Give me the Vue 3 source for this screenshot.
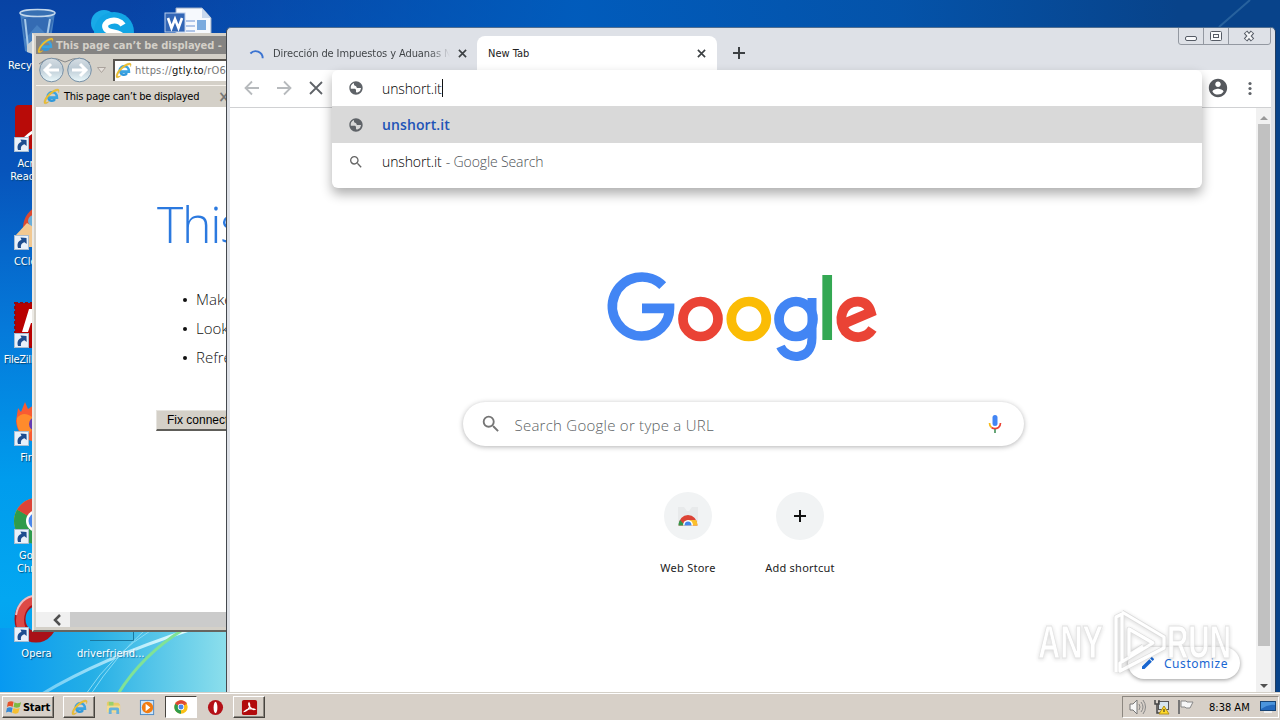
<template>
  <div class="desktop">
    <svg class="symbols" width="0" height="0">
      <symbol id="ie" viewBox="0 0 16 16">
        <path d="M13.2 9.2H5.2c.1 3.3 4.7 3.7 6 1.2" fill="none" stroke="#3198da" stroke-width="2.4" />
        <path d="M4.3 8.2c.2-5.6 8.9-5.7 8.9.9H5" fill="none" stroke="#3aa4e2" stroke-width="2.3" />
        <path d="M1.2 14.6C-.8 10.6 8.3 1.2 13.4 1c2.300 0 2 2 1.200 3.500.2-2-.8-2.300-3-1.300C7.500 5 3 10 2.400 13.200c1 .6 2 .2 3.200-.5-1.300 1.600-3.600 2.800-4.400 1.900z" fill="#f0c22c" stroke="#c9a338" stroke-width=".3" />
      </symbol>
      <symbol id="globe" viewBox="0 0 24 24">
        <path fill="#5f6368" d="M12 2C6.480 2 2 6.480 2 12s4.480 10 10 10 10-4.480 10-10S17.520 2 12 2zm3 16.500c-1.500.8-3 .5-3-1.200v-1.800c0-1.400-1-2.200-2.400-2.200H4.200A8 8 0 0 1 9 4.600c.2 1.600-.4 2.600.8 3.600 1.100.9 2.500.4 2.700 1.900.2 1.300 1 2 2.300 2h4.900a8 8 0 0 1-4.700 6.400z" />
      </symbol>
      <symbol id="lens" viewBox="0 0 24 24">
        <path fill="currentColor" d="M15.500 14h-.79l-.28-.27A6.470 6.470 0 0 0 16 9.500 6.500 6.500 0 1 0 9.500 16c1.610 0 3.090-.59 4.230-1.570l.27.28v.79l5 4.990L20.490 19l-4.990-5zm-6 0C7.010 14 5 11.990 5 9.500S7.010 5 9.500 5 14 7.010 14 9.500 11.990 14 9.500 14z" />
      </symbol>
      <symbol id="chrome" viewBox="0 0 48 48">
        <circle cx="24" cy="24" r="23" fill="#fbc116" />
        <path d="M24 24 4.100 12.500A23 23 0 0 1 43.900 12.500z" fill="#dc4437" />
        <path d="M24 24 4.100 12.500A23 23 0 0 0 24 47z" fill="#2f9b4c" />
        <path d="M24 13h20.200L34 30z" fill="#fbc116" />
        <path d="M4.100 12.500h40L24 24z" fill="#dc4437" />
        <circle cx="24" cy="24" r="11" fill="#fff" />
        <circle cx="24" cy="24" r="8.500" fill="#4a87ea" />
      </symbol>
      <symbol id="shortcut" viewBox="0 0 15 15">
        <rect x=".5" y=".5" width="14" height="14" fill="#e9f1fa" stroke="#a9bdd1" />
        <path d="M4 13C2.500 8 5 5.500 7.500 5L6.500 2.500 12.500 3l.2 6-2.200-1.700C8 8 6.500 9.500 7 13z" fill="#1d4d8f" />
      </symbol>
    </svg>

    <svg class="wallpaper" viewBox="0 0 1280 720">
      <defs>
        <linearGradient id="glow" x1="0" x2="1">
          <stop offset="0" stop-color="#0799f1" />
          <stop offset=".4" stop-color="#25afe6" />
          <stop offset="1" stop-color="#8fe0ec" />
        </linearGradient>
        <linearGradient id="ray" x1="0" x2="1">
          <stop offset="0" stop-color="#70cdf5" />
          <stop offset="1" stop-color="#e6ffff" />
        </linearGradient>
      </defs>
      <rect y="628" width="230" height="70" fill="url(#glow)" />
      <path d="M42 694Q100 659 192 629" fill="none" stroke="url(#ray)" stroke-width="3" />
      <path d="M86 694Q112 654 153 629M91 694Q115 657 146 629" fill="none" stroke="#8bdcf5" />
      <path d="M118 694Q142 655 184 629" fill="none" stroke="#80e296" stroke-width="3" />
      <path d="M1219 27 1250 0" stroke="#3c76ab" stroke-width="2" opacity=".6" />
      <path d="M90 640.500H133.500V630" fill="none" stroke="#1a789f" />
    </svg>

    <div v-for="item in shortcuts" :key="item.name" class="shortcut" :style="{ left: `${item.x}px`, top: `${item.y}px` }">
      <svg class="shortcut-icon" viewBox="0 0 48 48">
        <g v-if="item.icon === 'bin'">
          <path d="M7 6 12 44Q24 51 36 44L42 6z" fill="#4f87c5" opacity=".9" />
          <path d="M9 12 25 7 40 13 36 30 24 18 12 32z" fill="#2c63ad" opacity=".7" />
          <path d="M12 12 15 40M37 12 33 36" stroke="#a5c9ea" stroke-width="2" fill="none" />
          <path d="M14 38l7-6 11 3 3 9-12 4-9-3z" fill="#c2ccd3" />
          <ellipse cx="24.500" cy="6" rx="17.500" ry="3.500" fill="#3870b3" stroke="#c4d8ec" stroke-width="1.500" />
        </g>
        <g v-else-if="item.icon === 'skype'">
          <circle cx="16" cy="16" r="13" fill="#19aae8" /><circle cx="26" cy="25" r="20" fill="#12a5e5" />
          <path d="M35 18c-5-8-22-4-17 4 3 5 16 2 17 10 1 8-18 9-20 0" fill="none" stroke="#fff" stroke-width="6" />
        </g>
        <g v-else-if="item.icon === 'word'">
          <path d="M12 1H38L47 11V48H12z" fill="#f6f9fd" stroke="#9aabc4" />
          <path d="M38 1V11H47z" fill="#c8d8ed" /><path d="M22 14h9M22 19h9M22 24h9" stroke="#6991d3" />
          <rect x="33" y="13" width="9" height="10" fill="#7aaade" />
          <rect x="1" y="6" width="20" height="19" fill="#3266b6" stroke="#b8cce9" />
          <path d="M4 11 7.500 21 11 12 14.500 21 18 11" fill="none" stroke="#fff" stroke-width="2.600" />
        </g>
        <g v-else-if="item.icon === 'acrobat'">
          <rect x="2" y="0" width="44" height="44" rx="4" fill="#b80b08" />
          <path d="M12 33C15 30 18 27 24 25" fill="none" stroke="#fff" stroke-width="2.500" />
        </g>
        <g v-else-if="item.icon === 'ccleaner'">
          <path d="M10 24Q11 9 26 2L34 15 25 32z" fill="#dc4930" />
          <circle cx="21" cy="18" r="6" fill="#6aaed9" />
          <path d="M2 33 14 20 31 31 30 44H7z" fill="#f2c890" />
        </g>
        <g v-else-if="item.icon === 'filezilla'">
          <rect x="2" y="2" width="44" height="44" fill="#b80000" stroke="#8e0b12" stroke-width="2" stroke-dasharray="3 2" />
          <path d="M9 31 16 8H35L33 13H21L20 17H32L30 22H18L15 31z" fill="#fff" />
        </g>
        <g v-else-if="item.icon === 'firefox'">
          <path d="M3 22 5 9 8 13 12 3 15 10 21 6 25 12C42 7 48 23 42 34 33 48 5 46 3 22z" fill="#f85b32" />
          <path d="M4 19C10 11 20 16 23 24L14 38C8 36 3 29 4 19z" fill="#ff8b2c" /><circle cx="23" cy="25" r="7" fill="#653bb3" />
        </g>
        <use v-else-if="item.icon === 'chrome'" href="#chrome" />
        <g v-else-if="item.icon === 'opera'">
          <ellipse cx="23" cy="24" rx="16" ry="18" fill="none" stroke="#a91118" stroke-width="11" />
          <path d="M9 35C4 23 9 6 23 5" fill="none" stroke="#dd4a46" stroke-width="8" />
          <path d="M3 20C5 8 13 1 22 1" fill="none" stroke="#f0bcc0" stroke-width="2" />
        </g>
      </svg>
      <svg v-if="item.link" class="shortcut-arrow"><use href="#shortcut" /></svg>
      <span class="shortcut-name" :class="{ long: item.long }">{{ item.name }}</span>
    </div>
    <span class="file-name">driverfriend...</span>

    <section class="ie">
      <div class="ie-title"><svg><use href="#ie" /></svg><b>This page can’t be displayed -</b></div>
      <div class="ie-bar">
        <svg class="ie-nav" viewBox="0 0 64 28">
          <defs>
            <linearGradient id="orb" x1="0" y1="0" x2="0" y2="1">
              <stop offset="0" stop-color="#d6dee4" /><stop offset=".45" stop-color="#bccad4" /><stop offset="1" stop-color="#eaf8fb" />
            </linearGradient>
          </defs>
          <path d="M3 8Q14-2 29 6Q45-2 54 7" fill="none" stroke="#858789" />
          <circle cx="15.500" cy="14" r="11.800" fill="url(#orb)" stroke="#7790a6" /><circle cx="43.500" cy="14" r="11.800" fill="url(#orb)" stroke="#7790a6" />
          <path d="M23 14H9M15 8 9 14l6 6M36 14h14M44 8l6 6-6 6" fill="none" stroke="#fff" stroke-width="3" />
        </svg>
        <svg class="ie-drop" viewBox="0 0 9 6"><path d="M.5.500h8l-4 5z" fill="#e4dfda" stroke="#aaa29c" /></svg>
        <div class="ie-address"><svg><use href="#ie" /></svg><span>https://<i>gtly.to</i>/rO6</span></div>
      </div>
      <div class="ie-tab"><svg><use href="#ie" /></svg><span>This page can’t be displayed</span><b>×</b></div>
      <div class="ie-page">
        <h1>This page</h1>
        <ul><li>Make sure</li><li>Look for</li><li>Refresh</li></ul>
        <button>Fix connection</button>
      </div>
      <div class="ie-scroll"><svg viewBox="0 0 10 12"><path d="M8 1 3 6l5 5" fill="none" stroke="#505050" stroke-width="2.500" /></svg></div>
    </section>

    <section class="browser">
      <div class="tabs">
        <div class="tab">
          <svg class="spinner" viewBox="0 0 18 18"><path d="M1.500 9A7.500 7.500 0 0 1 14.500 14" fill="none" stroke="#3b73d1" stroke-width="2" /></svg>
          <span class="tab-title fade">Dirección de Impuestos y Aduanas N</span>
          <svg class="cross" viewBox="0 0 10 10"><path d="m1 1 8 8m0-8L1 9" /></svg>
        </div>
        <div class="tab active">
          <span class="tab-title">New Tab</span>
          <svg class="cross" viewBox="0 0 10 10"><path d="m1 1 8 8m0-8L1 9" /></svg>
        </div>
        <svg class="plus" viewBox="0 0 12 12"><path d="M6 0v12M0 6h12" stroke="#3c4043" stroke-width="2" /></svg>
        <svg class="controls" viewBox="0 0 93 17">
          <path d="M.5 0v14q0 2.500 2.500 2.500h87q2.500 0 2.500-2.500V0M25.500 0v16M50.500 0v16" fill="none" stroke="#9398a1" />
          <g fill="#f8f9fb" stroke="#555b65"><rect x="7.500" y="8.500" width="11" height="4" rx="1.500" /><rect x="32.500" y="3.500" width="11" height="9" rx="1" /><rect x="35.500" y="6.500" width="5" height="3" /></g>
          <path d="m67.500 4 7 8m0-8-7 8" stroke="#555b65" stroke-width="4.500" /><path d="m68 4.500 6 7m0-7-6 7" stroke="#f4f5f7" stroke-width="2.500" />
        </svg>
      </div>

      <div class="toolbar">
        <svg class="nav" viewBox="0 0 80 16">
          <path d="M15 8H2M8 1.500 1.500 8 8 14.500M33 8h13M40 1.500 46.500 8 40 14.500" fill="none" stroke="#b7babd" stroke-width="1.800" />
          <path d="m66 2 12 12M78 2 66 14" stroke="#5f6368" stroke-width="1.800" />
        </svg>
        <svg class="user" viewBox="0 0 24 24"><path fill="#55585d" d="M12 2C6.480 2 2 6.480 2 12s4.480 10 10 10 10-4.480 10-10S17.520 2 12 2zm0 3c1.660 0 3 1.340 3 3s-1.340 3-3 3-3-1.340-3-3 1.340-3 3-3zm0 14.200a7.200 7.200 0 0 1-6-3.220c.03-1.990 4-3.080 6-3.080 1.990 0 5.970 1.090 6 3.080a7.200 7.200 0 0 1-6 3.220z" /></svg>
        <svg class="dots" viewBox="0 0 4 16"><g fill="#5f6368"><circle cx="2" cy="3.500" r="1.600" /><circle cx="2" cy="8.500" r="1.600" /><circle cx="2" cy="13.500" r="1.600" /></g></svg>
      </div>

      <div class="viewport">
        <main class="newtab">
          <svg class="logo" viewBox="606 270 275 94" fill="none" stroke-width="9.700">
            <path d="M662.700 285.600A29.500 29.500 0 1 0 641.800 336A27.800 27.600 0 0 0 669.500 308.400H642" stroke="#4285f4" />
            <circle cx="700.500" cy="319" r="17.500" stroke="#ea4335" />
            <circle cx="748.800" cy="319" r="17.500" stroke="#fbbc05" />
            <ellipse cx="796" cy="319" rx="17" ry="17.500" stroke="#4285f4" />
            <path d="M812 298V338C812 361 787 361 780.500 346.500" stroke="#4285f4" stroke-width="9" />
            <path d="M827.200 275V340" stroke="#34a853" />
            <path d="M872.500 329C866 339 853 339.500 845.500 331.500 837 321 841.500 302 857.500 301.700 865 301.500 869 306 870.800 312.300L842 324.500" stroke="#ea4335" />
          </svg>
          <div class="search">
            <svg class="search-lens"><use href="#lens" /></svg>
            <span>Search Google or type a URL</span>
            <svg class="mic" viewBox="0 0 14 20">
              <rect x="4.500" y="1" width="5" height="11" rx="2.500" fill="#4285f4" />
              <path d="M1.500 9q0 3 2 4.500" fill="none" stroke="#f9bb17" stroke-width="1.700" />
              <path d="M3.500 13.500q3.500 2.200 7 0 2-1.500 2-4.500" fill="none" stroke="#ea4335" stroke-width="1.700" />
              <path d="M7 15v4" stroke="#4d9660" stroke-width="1.700" />
            </svg>
          </div>
          <div class="tiles">
            <div class="tile">
              <div class="disc"><svg viewBox="0 0 24 24">
                <path d="M2 3h6l3 4h2l3-4h6v15H2z" fill="#e8eaeb" />
                <path d="M2.500 21.500a9.500 10.500 0 0 1 19 0z" fill="#dc4335" />
                <path d="M2.500 21.500a9.500 10 0 0 1 1.500-5.500l5 5.500z" fill="#32984c" />
                <path d="M12 16h8.100q1.400 2 1.400 5.500H12z" fill="#fbc02b" />
                <path d="M7 21.500a5 5.500 0 0 1 10 0z" fill="#fff" /><path d="M8.500 21.500a3.500 4 0 0 1 7 0z" fill="#4387ec" />
              </svg></div>
              <span>Web Store</span>
            </div>
            <div class="tile">
              <div class="disc"><svg class="add" viewBox="0 0 12 12"><path d="M6 0v12M0 6h12" stroke="#111" stroke-width="2" /></svg></div>
              <span>Add shortcut</span>
            </div>
          </div>
        </main>
        <div class="scrollbar">
          <svg viewBox="0 0 8 5"><path d="m0 5 4-4 4 4z" fill="#999" /></svg>
          <div class="thumb"></div>
          <svg viewBox="0 0 8 5"><path d="m0 0 4 4 4-4z" fill="#505050" /></svg>
        </div>
        <div class="customize"><svg viewBox="0 0 24 24"><path fill="#1967d2" d="M3 17.250V21h3.750L17.810 9.940l-3.750-3.750zM20.710 7.040a1 1 0 0 0 0-1.410l-2.340-2.340a1 1 0 0 0-1.410 0l-1.830 1.830 3.750 3.750z" /></svg><span>Customize</span></div>
      </div>

      <div class="omnibox">
        <div class="omni-row typed"><svg><use href="#globe" /></svg><span>unshort.it</span><i class="caret"></i></div>
        <div class="omni-row selected"><svg><use href="#globe" /></svg><span>unshort.it</span></div>
        <div class="omni-row"><svg><use href="#lens" /></svg><span>unshort.it</span><em>- Google Search</em></div>
      </div>
    </section>

    <svg class="watermark" viewBox="0 0 210 72">
      <text x="8" y="50" textLength="65" lengthAdjust="spacingAndGlyphs">ANY</text>
      <g fill="none" stroke-linejoin="round">
        <path d="M86 64V9L92 6V55M92 4 134 29V40L90 63V55L123 35 99 21V47L113 38" stroke="#d4d4d4" stroke-width="4.500" />
        <path d="M86 64V9L92 6V55M92 4 134 29V40L90 63V55L123 35 99 21V47L113 38" stroke="#fff" stroke-width="3.200" />
      </g>
      <text x="137" y="50" textLength="64" lengthAdjust="spacingAndGlyphs">RUN</text>
    </svg>

    <footer class="taskbar">
      <div class="start raised"><svg viewBox="0 0 18 16"><path d="M2 3q3-2 6-.5L7 8Q4 6 1 8z" fill="#e5532b" /><path d="M9 3q3 2 7 0l-1.500 5q-3 1.500-6.500 0z" fill="#7dba42" /><path d="M1 9q3-1.500 6-.2L6 14q-3-2-6-.2z" fill="#3689d5" /><path d="M8 9q3 1.500 6.500 0L13 14q-3 2-6.500.2z" fill="#f5bf32" /></svg><b>Start</b></div>
      <div class="task raised"><svg><use href="#ie" /></svg></div>
      <div class="task"><svg viewBox="0 0 18 18"><path d="M2 4q1-2 3-1l2 1h7l2 2v8H2z" fill="#e9cb68" /><path d="M4 3h5v6H4z" fill="#9bd06b" /><path d="M2 7h14v7H2z" fill="#f5dc90" /><path d="M4 16v-5q0-2 2-2h7q2 0 2 2v5h-3v-4H7v4z" fill="#65b1dc" /></svg></div>
      <div class="task"><svg viewBox="0 0 18 18"><rect x="1.500" y="1.500" width="14" height="15" fill="#cde5fa" stroke="#4c89c4" /><circle cx="9" cy="9" r="6" fill="#f17c12" /><path d="m7 5 5 4-5 4z" fill="#fff" /></svg></div>
      <div class="task current"><svg class="chrome-small"><use href="#chrome" /></svg></div>
      <div class="task"><svg viewBox="0 0 18 18"><circle cx="9" cy="9" r="8" fill="#b41017" /><ellipse cx="9" cy="9" rx="2" ry="6" fill="#fff" /></svg></div>
      <div class="task raised"><svg viewBox="0 0 18 18"><rect x="1" y="1" width="16" height="16" rx="2" fill="#b20b0c" /><path d="M4 13C9 12 10 6 8.500 4 7 6 11 12 14.500 11 11 9 6 11 4 13z" fill="none" stroke="#fff" stroke-width="1.300" /></svg></div>
      <div class="tray">
        <svg viewBox="0 0 18 16"><path d="M1 5h3l4-4v14l-4-4H1z" fill="#f7f7f7" stroke="#777" /><path d="M10 5q2 3 0 6M12 3q4 5 0 10M14 1q5 7 0 14" fill="none" stroke="#888" /></svg>
        <svg viewBox="0 0 18 16"><rect x="5.500" y="2.500" width="10" height="8" fill="#d7e5ed" stroke="#555" /><path d="M2 1v4h4V1M4 5v9h5" fill="none" stroke="#444" stroke-width="1.500" /><path d="m11 7 5 8H6z" fill="#ffda29" stroke="#b59218" /><path d="M11 10v3" stroke="#222" /></svg>
        <svg viewBox="0 0 18 16"><path d="M2 1v14" stroke="#777" stroke-width="2" /><path d="M4 2h5l1 1h6l-3 6H9L8 8H4z" fill="#f7f7f7" stroke="#888" /></svg>
        <time>8:38 AM</time>
        <svg class="screen" viewBox="0 0 16 14"><rect x=".5" y="1.500" width="15" height="9" fill="#2469bd" stroke="#174374" /><path d="M1 2h14v3Q8 4 1 9z" fill="#4b94dc" /><path d="M4 12h8" stroke="#eee" stroke-width="2" /></svg>
      </div>
    </footer>
  </div>
</template>

<script setup>
import { ref } from 'vue'

// desktop shortcuts, x / y of the icon cell
const shortcuts = ref([
  { name: 'Recycle Bin', icon: 'bin', x: 0, y: 7 },
  { name: 'Skype', icon: 'skype', x: 75, y: 7 },
  { name: 'Word', icon: 'word', x: 151, y: 7 },
  { name: 'Acrobat Reader DC', icon: 'acrobat', x: 0, y: 105, link: true },
  { name: 'CCleaner', icon: 'ccleaner', x: 0, y: 203, link: true },
  { name: 'FileZilla Client', icon: 'filezilla', x: 0, y: 301, link: true, long: true },
  { name: 'Firefox', icon: 'firefox', x: 0, y: 399, link: true },
  { name: 'Google Chrome', icon: 'chrome', x: 0, y: 497, link: true },
  { name: 'Opera', icon: 'opera', x: 0, y: 595, link: true }
])
</script>

<style>
body {
  overflow: hidden;
}
</style>

<style scoped>
.desktop {
  position: relative;
  width: 1280px;
  height: 720px;
  overflow: hidden;
  font-family: "DejaVu Sans Condensed", "DejaVu Sans", sans-serif;
  font-size: 11px;
  background: linear-gradient(90deg, transparent 10%, rgba(0, 94, 190, .9) 45%, rgba(4, 84, 170, .95) 70%, #08438a 92%), linear-gradient(180deg, #0843a4 0, #0754bb 170px, #057ada 330px, #009ced 480px, #03a7f1 600px, #0799ec);
}
svg {
  display: block;
  flex: none;
}
.symbols,
.wallpaper {
  position: absolute;
}
.shortcut {
  position: absolute;
  display: flex;
  flex-direction: column;
  align-items: center;
  width: 73px;
  color: #fff;
  text-align: center;
}
.shortcut-icon {
  width: 48px;
  height: 48px;
}
.shortcut-arrow {
  position: absolute;
  left: 14px;
  top: 32px;
  width: 15px;
  height: 15px;
}
.shortcut-name {
  width: 64px;
  line-height: 13px;
  margin-top: 4px;
  text-shadow: 1px 1px 1px #064674;
}
.shortcut-name.long {
  width: auto;
  white-space: nowrap;
  letter-spacing: -.25px;
}
.file-name {
  position: absolute;
  left: 77px;
  top: 647px;
  color: #fff;
  text-shadow: 1px 1px 1px #177aaa;
}

.ie {
  position: absolute;
  left: 32px;
  top: 33px;
  width: 700px;
  height: 599px;
  box-sizing: border-box;
  border: 2px solid #d4d0c8;
  border-left-color: #eceae5;
  border-bottom: 2px solid #67655f;
  padding: 1px 2px 3px;
  display: flex;
  flex-direction: column;
  background: #d4d0c8;
}
.ie-title {
  height: 18px;
  display: flex;
  align-items: center;
  color: #d4d0c8;
  background: #858483;
}
.ie-title svg,
.ie-address svg,
.ie-tab svg {
  width: 17px;
  height: 17px;
}
.ie-title svg {
  margin-left: 1px;
}
.ie-title b {
  margin-left: 2px;
  letter-spacing: -.05px;
}
.ie-bar {
  height: 31px;
  display: flex;
  align-items: center;
}
.ie-nav {
  width: 64px;
  height: 28px;
}
.ie-drop {
  width: 9px;
  height: 6px;
  margin: 0 7px 0 -3px;
}
.ie-address {
  height: 20px;
  flex: 1;
  display: flex;
  align-items: center;
  color: #777;
  background: #fff;
  border-top: 2px solid #58544f;
  border-left: 2px solid #58544f;
}
.ie-address span {
  margin-left: 3px;
  letter-spacing: .2px;
}
.ie-address i {
  color: #111;
  font-style: normal;
}
.ie-tab {
  height: 22px;
  box-sizing: border-box;
  padding-left: 7px;
  display: flex;
  align-items: center;
  border-top: 1px solid #f7f3ee;
  color: #000;
}
.ie-tab span {
  margin-left: 4px;
  letter-spacing: -.25px;
}
.ie-tab b {
  margin-left: 19px;
  color: #777;
  font-size: 15px;
}
.ie-page {
  flex: 1;
  background: #fff;
  padding-left: 120px;
  font-family: "Open Sans", sans-serif;
}
.ie-page h1 {
  margin: 82px 0 0 1px;
  color: #2b79df;
  font-size: 50px;
  font-weight: 300;
  line-height: 70px;
  letter-spacing: -1.3px;
}
.ie-page ul {
  margin: 26px 0 0;
  padding-left: 40px;
  color: #111;
  font-size: 15px;
  font-weight: 300;
  line-height: 29px;
  list-style: none;
}
.ie-page li::before {
  content: "";
  float: left;
  width: 4px;
  height: 4px;
  margin: 13px 0 0 -13px;
  border-radius: 50%;
  background: #111;
}
.ie-page button {
  width: 150px;
  height: 21px;
  margin-top: 38px;
  padding: 0 10px;
  border: 1px solid #e6e4df;
  border-bottom: 2px solid #5e5d59;
  text-align: left;
  color: #000;
  background: #d4d0c8;
  font: 12px "Liberation Sans", sans-serif;
}
.ie-scroll {
  height: 15px;
  padding-left: 16px;
  display: flex;
  align-items: center;
  background: linear-gradient(90deg, #f0f0f0 34px, #cbcbcb 34px);
}
.ie-scroll svg {
  width: 10px;
  height: 12px;
}

.browser {
  position: absolute;
  left: 226px;
  top: 27px;
  width: 1050px;
  height: 666px;
  box-sizing: border-box;
  border: 1px solid #45494e;
  border-top-color: #516f91;
  border-right-color: #233e60;
  border-bottom: 0;
  border-radius: 5px 5px 0 0;
  padding: 0 4px 0 3px;
  display: flex;
  flex-direction: column;
  background: #dee1e7;
}
.tabs {
  height: 42px;
  display: flex;
  align-items: flex-end;
}
.tab {
  width: 256px;
  height: 34px;
  box-sizing: border-box;
  padding: 0 19px;
  display: flex;
  align-items: center;
  color: #3c4043;
}
.tab.active {
  width: 240px;
  margin-left: -9px;
  padding: 0 11px;
  border-radius: 8px 8px 0 0;
  background: #fff;
}
.spinner {
  width: 17px;
  height: 17px;
}
.tab-title {
  flex: 1;
  margin-left: 7px;
  overflow: hidden;
  white-space: nowrap;
  letter-spacing: -.1px;
}
.active .tab-title {
  margin-left: 0;
  color: #222;
  letter-spacing: 0;
}
.fade {
  color: transparent;
  background: linear-gradient(90deg, #3c4043 88%, #dee1e7);
  background-clip: text;
}
.cross {
  width: 9px;
  height: 9px;
  margin: 0 0 0 8px;
}
.cross path {
  stroke: #3c4043;
  stroke-width: 1.800;
}
.plus {
  width: 12px;
  height: 12px;
  margin: 0 0 11px 16px;
}
.controls {
  width: 93px;
  height: 17px;
  margin: 0 0 25px auto;
}
.toolbar {
  height: 38px;
  box-sizing: border-box;
  padding: 0 19px 2px 14px;
  border-bottom: 1px solid #d0d1d3;
  display: flex;
  align-items: center;
  background: #fff;
}
.nav {
  width: 80px;
  height: 16px;
}
.user {
  width: 22px;
  height: 22px;
  margin-left: auto;
}
.dots {
  width: 4px;
  height: 16px;
  margin-left: 19px;
}
.viewport {
  position: relative;
  flex: 1;
  display: flex;
  background: #fff;
}
.newtab {
  flex: 1;
  display: flex;
  flex-direction: column;
  align-items: center;
  font-family: "Noto Sans", sans-serif;
}
.logo {
  width: 275px;
  height: 94px;
  margin-top: 162px;
}
.search {
  width: 561px;
  height: 44px;
  box-sizing: border-box;
  margin-top: 38px;
  padding: 0 22px 0 17px;
  border-radius: 22px;
  display: flex;
  align-items: center;
  color: #5b5f63;
  box-shadow: 0 1px 5px rgba(32, 33, 36, .34);
  font: 300 15px "Open Sans", sans-serif;
  letter-spacing: .25px;
}
.search-lens {
  width: 22px;
  height: 22px;
  color: #757575;
}
.search span {
  margin-left: 13px;
  padding-top: 2px;
}
.mic {
  width: 14px;
  height: 20px;
  margin-left: auto;
}
.tiles {
  display: flex;
  margin: 46px 0 0 2px;
}
.tile {
  width: 112px;
  display: flex;
  flex-direction: column;
  align-items: center;
  color: #222;
  font-size: 11px;
  letter-spacing: .25px;
}
.tile span {
  margin-top: 20px;
}
.disc {
  width: 48px;
  height: 48px;
  display: flex;
  align-items: center;
  justify-content: center;
  border-radius: 50%;
  background: #f1f3f4;
}
.disc svg {
  width: 24px;
  height: 24px;
}
.disc .add {
  width: 12px;
  height: 12px;
}
.scrollbar {
  width: 15px;
  padding: 7px 0 4px;
  box-sizing: border-box;
  display: flex;
  flex-direction: column;
  align-items: center;
  background: #f1f1f1;
}
.scrollbar svg {
  width: 8px;
  height: 5px;
}
.thumb {
  width: 12px;
  height: 522px;
  margin: 4px 0 auto;
  background: #c1c1c1;
}
.customize {
  position: absolute;
  right: 31px;
  bottom: 14px;
  width: 112px;
  height: 32px;
  box-sizing: border-box;
  padding: 0 12px;
  display: flex;
  align-items: center;
  justify-content: space-between;
  border-radius: 16px;
  color: #1967d2;
  background: #fff;
  box-shadow: 0 1px 4px rgba(0, 0, 0, .4);
  font: 12px "Noto Sans", sans-serif;
  letter-spacing: .55px;
}
.customize svg {
  width: 16px;
  height: 16px;
}
.omnibox {
  position: absolute;
  left: 105px;
  top: 42px;
  width: 870px;
  height: 118px;
  border-radius: 6px;
  overflow: hidden;
  background: #fff;
  box-shadow: 0 6px 12px rgba(0, 0, 0, .32);
  font: 300 14px "Open Sans", sans-serif;
  letter-spacing: -.12px;
  color: #000;
}
.omni-row {
  height: 37px;
  padding-left: 16px;
  display: flex;
  align-items: center;
}
.omni-row svg {
  width: 16px;
  height: 16px;
  margin-right: 18px;
  color: #666;
}
.typed {
  height: 36px;
}
.selected {
  color: #2153b7;
  background: #d9d9d9;
  font-weight: 600;
  letter-spacing: .1px;
}
.omni-row em {
  margin-left: 4px;
  color: #4d5156;
  font-style: normal;
}
.caret {
  width: 1px;
  height: 18px;
  background: #111;
}
.watermark {
  position: absolute;
  left: 1030px;
  top: 608px;
  width: 210px;
  height: 72px;
  opacity: .82;
  filter: drop-shadow(0 1px 2px rgba(0, 0, 0, .18));
}
.watermark text {
  font: bold 46px "Liberation Sans", sans-serif;
  fill: #fff;
  stroke: #dcdcdc;
  stroke-width: 1;
}
.taskbar {
  position: absolute;
  left: 0;
  right: 0;
  bottom: 0;
  height: 28px;
  box-sizing: border-box;
  border-top: 1px solid #d4d0c8;
  box-shadow: inset 0 1px #fff;
  padding: 3px 1px 2px 2px;
  display: flex;
  align-items: center;
  background: #d7d0c8;
}
.raised {
  border: 1px solid;
  border-color: #fff #47443f #47443f #fff;
  box-shadow: inset -1px -1px #8c8780;
}
.start {
  width: 50px;
  height: 20px;
  margin-right: 9px;
  display: flex;
  align-items: center;
  justify-content: center;
}
.start b {
  color: #000;
  letter-spacing: -.2px;
}
.start svg {
  width: 17px;
  height: 16px;
}
.task {
  width: 32px;
  height: 22px;
  box-sizing: border-box;
  margin-right: 2px;
  display: flex;
  align-items: center;
  justify-content: center;
}
.task svg {
  width: 17px;
  height: 17px;
}
.task .chrome-small {
  width: 14px;
  height: 14px;
}
.current {
  border: 1px solid;
  border-color: #47443f #fff #fff #47443f;
  background: #fff;
}
.tray {
  width: 157px;
  height: 22px;
  box-sizing: border-box;
  margin-left: auto;
  padding: 0 2px 0 6px;
  display: flex;
  align-items: center;
  border: 1px solid;
  border-color: #8c8780 #fff #fff #8c8780;
}
.tray svg {
  width: 18px;
  height: 16px;
  margin-right: 6px;
}
.tray time {
  margin-left: 8px;
  white-space: nowrap;
}
.tray .screen {
  width: 16px;
  height: 14px;
  margin: 0 0 0 auto;
}
</style>
